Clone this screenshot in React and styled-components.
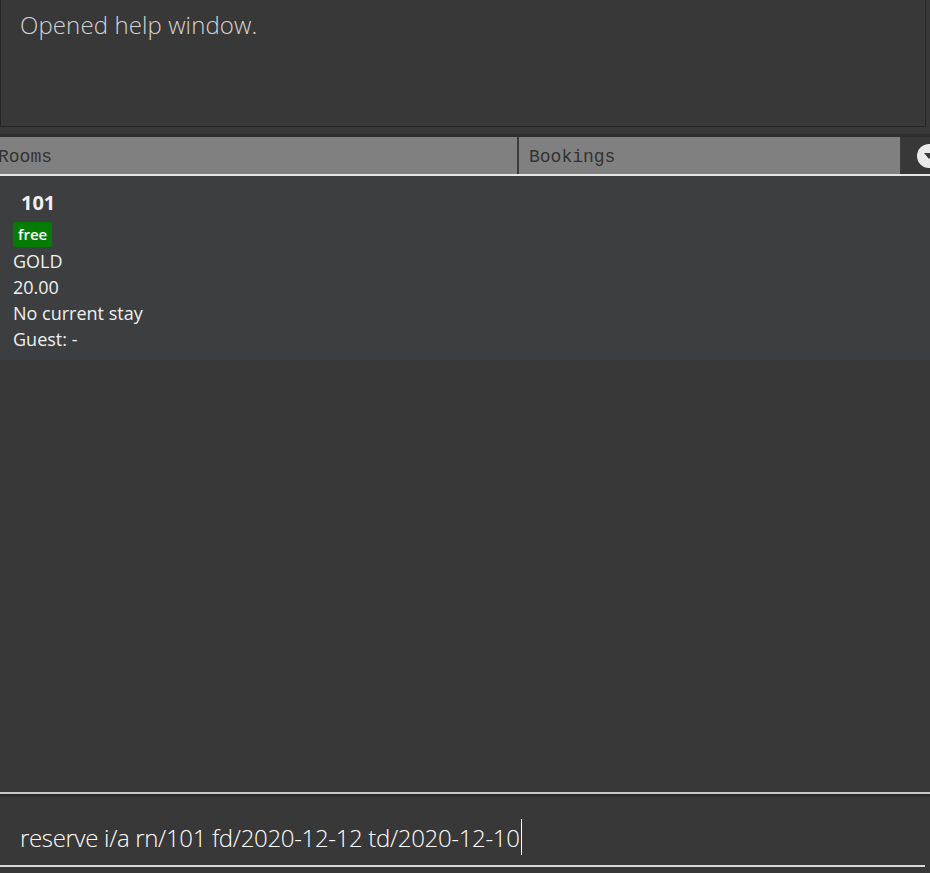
import styled, { createGlobalStyle } from 'styled-components';

const GlobalStyle = createGlobalStyle`
  html, body {
    margin: 0;
    padding: 0;
    background: #383838;
  }
  #root {
    height: 873px;
  }
`;

const Window = styled.div`
  display: flex;
  flex-direction: column;
  width: 930px;
  height: 873px;
  background: #383838;
  overflow: hidden;
  font-family: "Open Sans", "Noto Sans", sans-serif;
`;

const ResultDisplay = styled.div`
  height: 127px;
  margin-right: 4px;
  border: 1px solid #262626;
  border-top: none;
  background: #383838;
  padding: 9px 19px;
  box-sizing: border-box;
  color: #d4d4d4;
  font-size: 24px;
  font-weight: 300;
  line-height: 32px;
  letter-spacing: 0.1px;
`;

const Divider = styled.div`
  height: 10px;
  border-bottom: 3px solid #2f2f2f;
  box-sizing: border-box;
`;

const TabBar = styled.div`
  display: flex;
  height: 37px;
  border-bottom: 2px solid #e6e6e6;
`;

const Tab = styled.div`
  width: ${p => p.$width}px;
  background: #808080;
  border-right: 2px solid #3a3a3a;
  display: flex;
  align-items: center;
  padding-left: ${p => p.$pad}px;
  padding-top: 2px;
  box-sizing: border-box;
  font-family: "Liberation Mono", "Courier New", monospace;
  font-size: 18px;
  color: #333;
  overflow: hidden;
  white-space: nowrap;
`;

const TabControl = styled.div`
  flex: 1;
  position: relative;
  background: #383838;
  overflow: hidden;
`;

const DropButton = styled.svg`
  position: absolute;
  left: 14px;
  top: 6px;
`;

const Card = styled.div`
  background: #3c3e3f;
  padding: 12px 13px 8px;
  display: flex;
  flex-direction: column;
  align-items: flex-start;
  color: #f0f0f0;
`;

const RoomNumber = styled.div`
  font-size: 20px;
  font-weight: 700;
  line-height: 30px;
  padding-left: 8px;
  margin-bottom: 2px;
`;

const Badge = styled.span`
  background: #047c04;
  color: #fff;
  border-radius: 2px;
  font-size: 15px;
  font-weight: 600;
  line-height: 25px;
  padding: 0 5px;
  margin: 2px 0 1px;
`;

const Field = styled.div`
  font-size: 18px;
  line-height: 26px;
`;

const ListArea = styled.div`
  flex: 1;
`;

const CommandSeparator = styled.div`
  height: 5px;
  border-top: 2px solid #c8c8c8;
  background: linear-gradient(#262626, #333);
  box-sizing: border-box;
`;

const CommandBox = styled.div`
  height: 76px;
  padding: 0 5px 0 0;
  box-sizing: border-box;
  display: flex;
  flex-direction: column;
`;

const CommandField = styled.div`
  flex: 1;
  display: flex;
  align-items: center;
  padding-left: 20px;
  padding-top: 12px;
  border-bottom: 2px solid #d8d8d8;
  margin-bottom: 6px;
  color: #fff;
  font-size: 24px;
  font-weight: 300;
  letter-spacing: -0.33px;
`;

const Caret = styled.span`
  display: inline-block;
  width: 1px;
  height: 36px;
  background: #fff;
  margin-left: 1px;
  vertical-align: middle;
`;

const rooms = [
  { number: '101', status: 'free', tier: 'GOLD', price: '20.00', stay: 'No current stay', guest: '-' },
];

export default function App() {
  return (
    <Window>
      <GlobalStyle />
      <ResultDisplay>Opened help window.</ResultDisplay>
      <Divider />
      <TabBar>
        <Tab $width={519} $pad={0} style={{ textIndent: '-2px' }}>Rooms</Tab>
        <Tab $width={383} $pad={10}>Bookings</Tab>
        <TabControl>
          <DropButton width="26" height="26" viewBox="0 0 26 26">
            <circle cx="13" cy="13" r="12" fill="#eaeaea" />
            <path d="M8 10 L18 10 L13 16 Z" fill="#3a3a3a" />
          </DropButton>
        </TabControl>
      </TabBar>
      {rooms.map(r => (
        <Card key={r.number}>
          <RoomNumber>{r.number}</RoomNumber>
          <Badge>{r.status}</Badge>
          <Field>{r.tier}</Field>
          <Field>{r.price}</Field>
          <Field>{r.stay}</Field>
          <Field>Guest: {r.guest}</Field>
        </Card>
      ))}
      <ListArea />
      <CommandSeparator />
      <CommandBox>
        <CommandField>
          reserve i/a rn/101 fd/2020-12-12 td/2020-12-10<Caret />
        </CommandField>
      </CommandBox>
    </Window>
  );
}
